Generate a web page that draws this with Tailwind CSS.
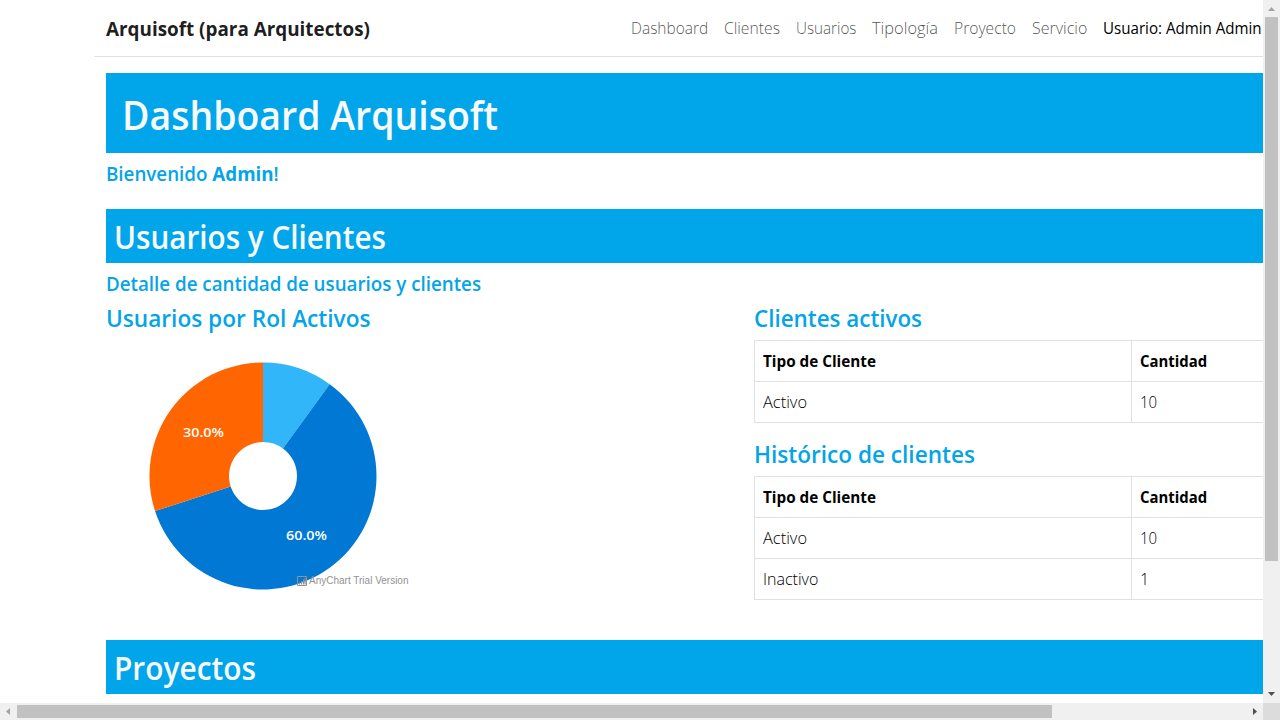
<!DOCTYPE html>
<html lang="es">
<head>
<meta charset="utf-8">
<title>Arquisoft</title>
<script src="https://cdn.jsdelivr.net/npm/@tailwindcss/browser@4"></script>
</head>
<body class="h-[720px] w-[1280px] overflow-hidden bg-white font-['Open_Sans','Noto_Sans',sans-serif] text-black [&_span]:inline-block [&_span]:origin-left">
<div class="grid h-full grid-cols-[1263px_17px] grid-rows-[703px_17px]">
  <div class="overflow-hidden pl-[94px]">
    <div class="w-[1320px]">
      <header class="flex h-[57px] items-center border-b border-[#dee2e6] pl-3 whitespace-nowrap">
        <div class="w-[525px] text-xl leading-[30px] font-bold text-black/90"><span class="translate-y-px scale-x-[.943]">Arquisoft (para Arquitectos)</span></div>
        <nav class="flex text-base leading-6 font-light text-black/70">
          <a class="w-[93px]"><span class="scale-x-[.968]">Dashboard</span></a>
          <a class="w-[72px]"><span class="scale-x-[.982]">Clientes</span></a>
          <a class="w-[76px]"><span class="scale-x-[.951]">Usuarios</span></a>
          <a class="w-[82px]"><span class="scale-x-[1.026]">Tipología</span></a>
          <a class="w-[78px]"><span class="scale-x-[.978]">Proyecto</span></a>
          <a class="w-[71px]"><span>Servicio</span></a>
          <a class="w-[160px] font-normal text-black"><span class="scale-x-[.945]">Usuario: Admin Admin</span></a>
        </nav>
      </header>
      <main class="px-3 pt-4 font-semibold text-[#03a4e8]">
        <h1 class="bg-[#00a6e9] p-4 text-[40px] leading-[48px] text-[#f8f9fa]"><span class="translate-y-0.5 scale-x-[.936]">Dashboard Arquisoft</span></h1>
        <h5 class="mt-2 text-xl leading-6"><span class="translate-y-px scale-x-[.938]">Bienvenido <b class="font-bold">Admin</b>!</span></h5>
        <h2 class="mt-6 bg-[#00a6e9] p-2 text-[32px] leading-[38px] text-[#f8f9fa]"><span class="translate-y-px scale-x-[.927]">Usuarios y Clientes</span></h2>
        <h5 class="mt-2 text-xl leading-6"><span class="translate-y-px scale-x-[.938]">Detalle de cantidad de usuarios y clientes</span></h5>
        <div class="mt-2 grid grid-cols-[648px_648px]">
          <section>
            <h4 class="text-2xl leading-[29px]"><span class="scale-x-[.943]">Usuarios por Rol Activos</span></h4>
            <svg class="block h-[280px] w-[320px]" viewBox="106 332 320 280">
              <path fill="#30b6f9" d="M263 362.5A113.5 113.5 0 0 1 329.71 384.18L282.98 448.49A34 34 0 0 0 263 442Z"/>
              <path fill="#0078d4" d="M329.71 384.18A113.5 113.5 0 1 1 155.05 511.07L230.66 486.51A34 34 0 1 0 282.98 448.49Z"/>
              <path fill="#ff6500" d="M155.05 511.07A113.5 113.5 0 0 1 263 362.5V442A34 34 0 0 0 230.66 486.51Z"/>
              <g class="text-[13px] font-semibold" fill="#fff">
                <text x="183" y="437" textLength="41" lengthAdjust="spacingAndGlyphs">30.0%</text>
                <text x="286" y="540" textLength="41" lengthAdjust="spacingAndGlyphs">60.0%</text>
              </g>
              <g fill="none" stroke="#929292">
                <path d="M297.5 576.5H306.5V585.5H297.5Z"/>
                <path stroke-width="1.2" d="M299.5 584.5V582.5M301.5 584.5V581M303.5 584.5V579.5M305.1 584.5V578"/>
              </g>
              <text class="font-['Liberation_Sans',sans-serif] text-[10px] font-normal" fill="#929292" x="309" y="584" textLength="99.5" lengthAdjust="spacingAndGlyphs">AnyChart Trial Version</text>
            </svg>
          </section>
          <section>
            <h4 class="text-2xl leading-[29px]"><span class="scale-x-[.933]">Clientes activos</span></h4>
            <table class="mt-2 w-[624px] table-fixed border-collapse text-left text-base leading-6 font-normal text-black [&_td]:border [&_td]:border-[#dee2e6] [&_td]:p-2 [&_th]:border [&_th]:border-[#dee2e6] [&_th]:p-2">
              <tr class="font-bold"><th class="w-[377px]"><span class="scale-x-[.954]">Tipo de Cliente</span></th><th><span class="scale-x-[.93]">Cantidad</span></th></tr>
              <tr class="font-light"><td><span class="scale-x-[1.026]">Activo</span></td><td><span class="scale-x-[.94]">10</span></td></tr>
            </table>
            <h4 class="mt-4 text-2xl leading-[29px]"><span class="scale-x-[.941]">Histórico de clientes</span></h4>
            <table class="mt-2 w-[624px] table-fixed border-collapse text-left text-base leading-6 font-normal text-black [&_td]:border [&_td]:border-[#dee2e6] [&_td]:p-2 [&_th]:border [&_th]:border-[#dee2e6] [&_th]:p-2">
              <tr class="font-bold"><th class="w-[377px]"><span class="scale-x-[.954]">Tipo de Cliente</span></th><th><span class="scale-x-[.93]">Cantidad</span></th></tr>
              <tr class="font-light"><td><span class="scale-x-[1.026]">Activo</span></td><td><span class="scale-x-[.94]">10</span></td></tr>
              <tr class="font-light"><td><span>Inactivo</span></td><td><span>1</span></td></tr>
            </table>
          </section>
        </div>
        <h2 class="mt-7 bg-[#00a6e9] p-2 text-[32px] leading-[38px] text-[#f8f9fa]"><span class="translate-y-px scale-x-[.933]">Proyectos</span></h2>
      </main>
    </div>
  </div>
  <div class="flex flex-col items-center bg-[#f0f0f0]">
    <svg class="block h-[17px] w-[17px]" viewBox="0 0 17 17"><path fill="#a3a3a3" d="M5 11L8.5 7L12 11Z"/></svg>
    <div class="h-[544px] w-[13px] bg-[#c1c1c1]"></div>
    <svg class="mt-auto block h-[17px] w-[17px]" viewBox="0 0 17 17"><path fill="#505050" d="M5 6H12L8.5 10Z"/></svg>
  </div>
  <div class="flex items-center bg-[#f0f0f0]">
    <svg class="block h-[17px] w-[17px]" viewBox="0 0 17 17"><path fill="#a3a3a3" d="M10 5V12L6 8.5Z"/></svg>
    <div class="h-[13px] w-[1035px] bg-[#c1c1c1]"></div>
    <svg class="ml-auto block h-[17px] w-[17px]" viewBox="0 0 17 17"><path fill="#505050" d="M7 5V12L11 8.5Z"/></svg>
  </div>
  <div class="bg-[#dcdcdc]"></div>
</div>
</body>
</html>
